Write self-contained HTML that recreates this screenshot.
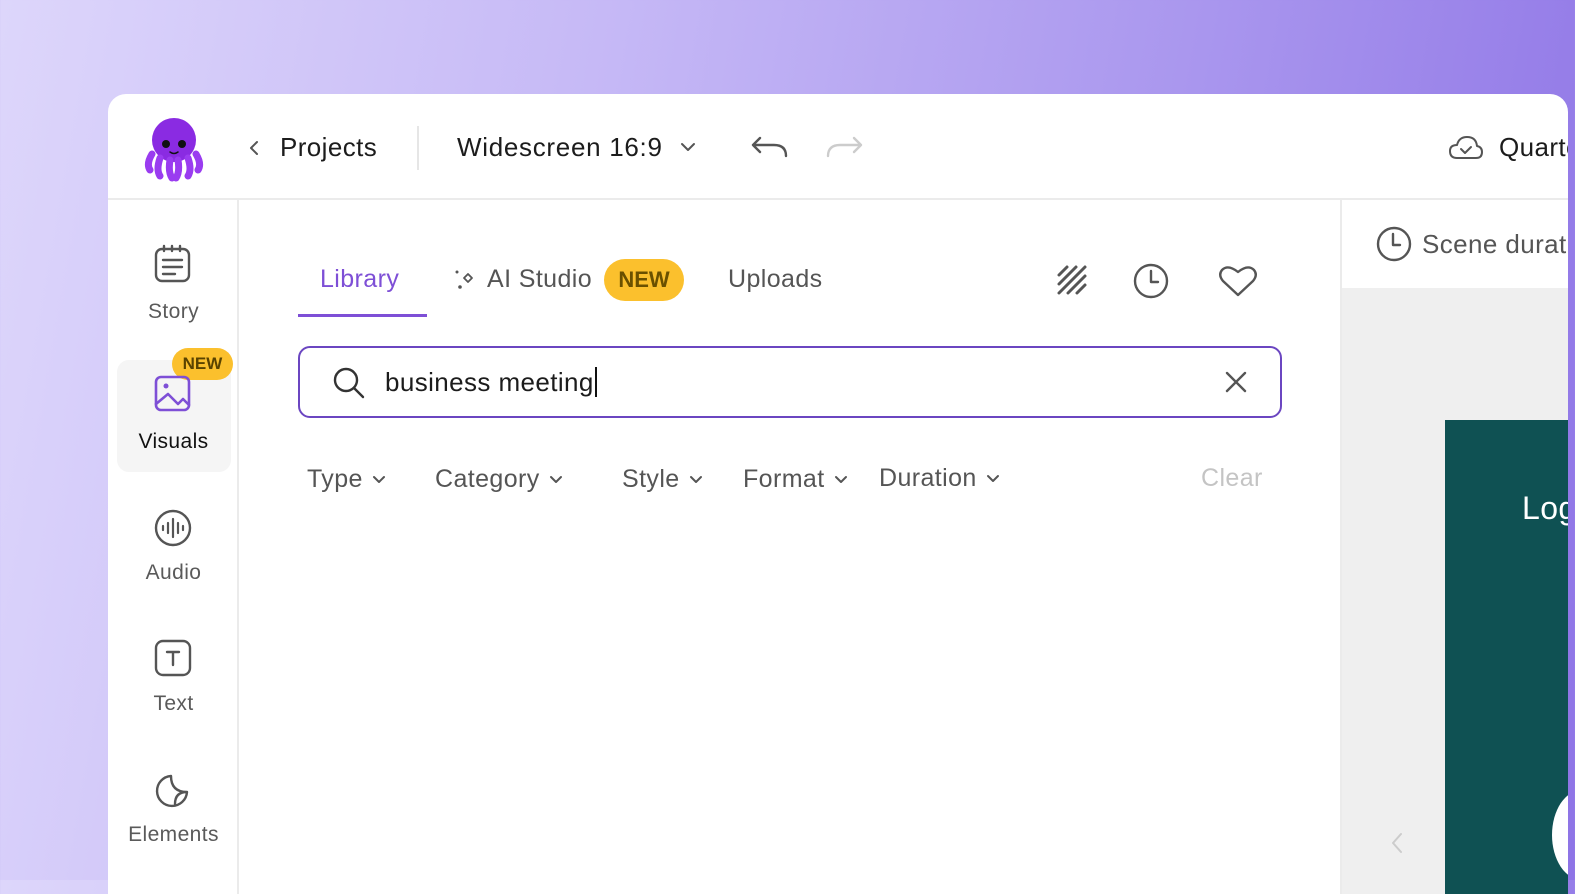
<!DOCTYPE html><html><head><style>
*{margin:0;padding:0;box-sizing:border-box}
body{width:1575px;height:880px;overflow:hidden;font-family:"Liberation Sans",sans-serif;background:linear-gradient(100deg,#ddd6fb 0%,#c6b9f6 35%,#a996ee 70%,#8e74e6 100%);position:relative}
.card{position:absolute;left:108px;top:94px;width:1460px;height:800px;background:#fff;border-radius:18px 18px 0 0;overflow:hidden}
.hdr{position:absolute;left:0;top:0;right:0;height:106px;border-bottom:2px solid #ebebeb}
.t{position:absolute;white-space:nowrap;letter-spacing:0.4px}
.side{position:absolute;left:0;top:106px;width:131px;bottom:0;border-right:2px solid #ebebeb}
.si{position:absolute;left:0;width:131px;text-align:center;font-size:21px;color:#5a5a5a;letter-spacing:0.4px}
.right{position:absolute;left:1232px;top:106px;right:0;bottom:0;border-left:2px solid #ebebeb;background:#efefef}
svg{position:absolute;fill:none;stroke-linecap:round;stroke-linejoin:round}
.dd{font-size:25px;color:#555;display:flex;align-items:center;gap:9px}
.dd svg{position:static}
</style></head><body>
<div class="card">
<div class="hdr">
 <svg style="left:34px;top:20px" width="64" height="68" viewBox="0 0 64 68">
  <ellipse cx="32" cy="26" rx="22" ry="22" fill="#8a2be2"/>
  <path d="M10 40 Q4 50 8 56 M18 44 Q14 56 18 62 M28 46 Q26 58 30 64 M36 46 Q38 58 34 64 M46 44 Q50 56 46 62 M54 40 Q60 50 56 56" stroke="#9a3cf0" stroke-width="7"/>
  <circle cx="24" cy="30" r="4" fill="#111"/><circle cx="40" cy="30" r="4" fill="#111"/>
  <path d="M28 38 Q32 41 36 38" stroke="#111" stroke-width="1.5"/>
 </svg>
 <svg style="left:140px;top:46px" width="12" height="16" viewBox="0 0 12 16"><path d="M9 2 L3 8 L9 14" stroke="#555" stroke-width="2"/></svg>
 <div class="t" style="left:172px;top:38px;font-size:26px;color:#1c1c1c">Projects</div>
 <div style="position:absolute;left:309px;top:32px;width:2px;height:44px;background:#e6e6e6"></div>
 <div class="t" style="left:349px;top:38px;font-size:26px;color:#1c1c1c;letter-spacing:0.7px">Widescreen 16:9</div>
 <svg style="left:572px;top:47px" width="16" height="12" viewBox="0 0 16 12"><path d="M2 3 L8 9 L14 3" stroke="#555" stroke-width="2"/></svg>
 <svg style="left:642px;top:40px" width="40" height="26" viewBox="0 0 40 26"><path d="M10 4 L3 11 L10 18 M3 11 H24 Q36 11 36 22" stroke="#555" stroke-width="2.4"/></svg>
 <svg style="left:716px;top:40px" width="40" height="26" viewBox="0 0 40 26"><path d="M30 4 L37 11 L30 18 M37 11 H16 Q4 11 4 22" stroke="#ccc" stroke-width="2.4"/></svg>
 <svg style="left:1340px;top:40px" width="36" height="28" viewBox="0 0 36 28"><path d="M9 24 Q2 24 2 17 Q2 11 9 11 Q11 3 19 3 Q28 3 29 12 Q34 13 34 18 Q34 24 28 24 Z M13 15 L17 19 L23 13" stroke="#555" stroke-width="2"/></svg>
 <div class="t" style="left:1391px;top:38px;font-size:26px;color:#1c1c1c">Quarterly</div>
</div>
<div class="side">
 <svg style="left:45px;top:44px" width="40" height="40" viewBox="0 0 40 40"><rect x="3" y="5" width="33" height="32" rx="6" stroke="#555" stroke-width="2.4"/><path d="M11 2 V7 M19 2 V7 M27 2 V7 M10 16 H29 M10 23 H29 M10 30 H22" stroke="#555" stroke-width="2.4"/></svg>
 <div class="si" style="top:100px">Story</div>
 <div style="position:absolute;left:9px;top:160px;width:114px;height:112px;background:#f5f5f5;border-radius:12px"></div>
 <div style="position:absolute;left:64px;top:148px;width:61px;height:32px;background:#fbc02d;border-radius:16px;font-size:17px;font-weight:bold;color:#5a4300;text-align:center;line-height:32px">NEW</div>
 <svg style="left:45px;top:174px" width="40" height="40" viewBox="0 0 40 40"><rect x="3" y="3" width="33" height="33" rx="5" stroke="#7e4fd6" stroke-width="2.6"/><circle cx="13" cy="12" r="2.5" fill="#7e4fd6" stroke="none"/><path d="M3 30 L15 20 L25 30 L30 25 L36 31" stroke="#7e4fd6" stroke-width="2.6"/></svg>
 <div class="si" style="top:230px;color:#111">Visuals</div>
 <svg style="left:45px;top:308px" width="40" height="40" viewBox="0 0 40 40"><circle cx="20" cy="20" r="17" stroke="#555" stroke-width="2.4"/><path d="M10 18 V22 M15 15 V25 M20 11 V29 M25 15 V25 M30 18 V22" stroke="#555" stroke-width="2.2"/></svg>
 <div class="si" style="top:361px">Audio</div>
 <svg style="left:45px;top:438px" width="40" height="40" viewBox="0 0 40 40"><rect x="3" y="3" width="34" height="34" rx="7" stroke="#555" stroke-width="2.4"/><path d="M14 14 H26 M20 14 V27" stroke="#555" stroke-width="2.4"/></svg>
 <div class="si" style="top:492px">Text</div>
 <svg style="left:45px;top:570px" width="40" height="40" viewBox="0 0 40 40"><path d="M34 22 A15 15 0 1 1 18 6 Q18 22 34 22 Z M34 22 Q22 22 22 34" stroke="#555" stroke-width="2.4"/></svg>
 <div class="si" style="top:623px">Elements</div>
</div>
<div class="t" style="left:212px;top:171px;font-size:25px;color:#7e4fd6">Library</div>
<div style="position:absolute;left:190px;top:220px;width:129px;height:3px;background:#7e4fd6"></div>
<svg style="left:346px;top:174px" width="22" height="24" viewBox="0 0 22 24"><circle cx="3" cy="4" r="1.5" fill="#555" stroke="none"/><circle cx="6" cy="19" r="1.8" fill="#555" stroke="none"/><path d="M14 6 L18 10 L14 14 L10 10 Z" stroke="#555" stroke-width="1.8"/></svg>
<div class="t" style="left:379px;top:171px;font-size:25px;color:#555">AI Studio</div>
<div style="position:absolute;left:496px;top:165px;width:80px;height:42px;background:#fbc02d;border-radius:21px;font-size:22px;font-weight:bold;color:#6a5000;text-align:center;line-height:42px">NEW</div>
<div class="t" style="left:620px;top:171px;font-size:25px;color:#555">Uploads</div>
<svg style="left:948px;top:170px" width="32" height="32" viewBox="0 0 32 32"><path d="M3 11 L11 3 M3 20 L20 3 M3 29 L29 3 M12 29 L29 12 M21 29 L29 21" stroke="#555" stroke-width="3"/></svg>
<svg style="left:1024px;top:168px" width="38" height="38" viewBox="0 0 38 38"><circle cx="19" cy="19" r="16" stroke="#555" stroke-width="2.4"/><path d="M19 9 V20 H26" stroke="#555" stroke-width="2.4"/></svg>
<svg style="left:1110px;top:170px" width="40" height="34" viewBox="0 0 40 34"><path d="M20 31 L5 17 Q0 11 4 6 Q10 0 20 8 Q30 0 36 6 Q40 11 35 17 Z" stroke="#555" stroke-width="2.4"/></svg>
<div style="position:absolute;left:190px;top:252px;width:984px;height:72px;border:2px solid #6b46c1;border-radius:12px"></div>
<svg style="left:224px;top:272px" width="34" height="34" viewBox="0 0 34 34"><circle cx="14" cy="14" r="11" stroke="#333" stroke-width="2.4"/><path d="M22 22 L31 31" stroke="#333" stroke-width="2.4"/></svg>
<div class="t" style="left:277px;top:273px;font-size:26px;color:#1c1c1c">business meeting<span style="border-left:2px solid #111;margin-left:1px"></span></div>
<svg style="left:1116px;top:276px" width="24" height="24" viewBox="0 0 24 24"><path d="M3 3 L21 21 M21 3 L3 21" stroke="#555" stroke-width="2.4"/></svg>
<div class="t dd" style="left:199px;top:371px">Type<svg width="14" height="10" viewBox="0 0 14 10"><path d="M2 2 L7 7 L12 2" stroke="#555" stroke-width="2"/></svg></div>
<div class="t dd" style="left:327px;top:371px">Category<svg width="14" height="10" viewBox="0 0 14 10"><path d="M2 2 L7 7 L12 2" stroke="#555" stroke-width="2"/></svg></div>
<div class="t dd" style="left:514px;top:371px">Style<svg width="14" height="10" viewBox="0 0 14 10"><path d="M2 2 L7 7 L12 2" stroke="#555" stroke-width="2"/></svg></div>
<div class="t dd" style="left:635px;top:371px">Format<svg width="14" height="10" viewBox="0 0 14 10"><path d="M2 2 L7 7 L12 2" stroke="#555" stroke-width="2"/></svg></div>
<div class="t dd" style="left:771px;top:370px">Duration<svg width="14" height="10" viewBox="0 0 14 10"><path d="M2 2 L7 7 L12 2" stroke="#555" stroke-width="2"/></svg></div>
<div class="t" style="left:1093px;top:370px;font-size:25px;color:#c4c4c4">Clear</div>
<div class="right">
 <div style="position:absolute;left:0;top:0;right:0;height:88px;background:#fff"></div>
 <svg style="left:32px;top:24px" width="40" height="40" viewBox="0 0 40 40"><circle cx="20" cy="20" r="16" stroke="#555" stroke-width="2.4"/><path d="M19 10 V21 H26" stroke="#555" stroke-width="2.4"/></svg>
 <div class="t" style="left:80px;top:29px;font-size:26px;color:#555">Scene duration</div>
 <div style="position:absolute;left:103px;top:220px;width:200px;height:480px;background:#0f5153"></div>
 <div class="t" style="left:180px;top:290px;font-size:32px;color:#fff">Logo</div>
 <div style="position:absolute;left:210px;top:590px;width:60px;height:90px;border-radius:50%;background:#fff"></div>
 <svg style="left:48px;top:632px" width="14" height="22" viewBox="0 0 14 22"><path d="M11 2 L3 11 L11 20" stroke="#ccc" stroke-width="2"/></svg>
</div>
</div>
</body></html>
